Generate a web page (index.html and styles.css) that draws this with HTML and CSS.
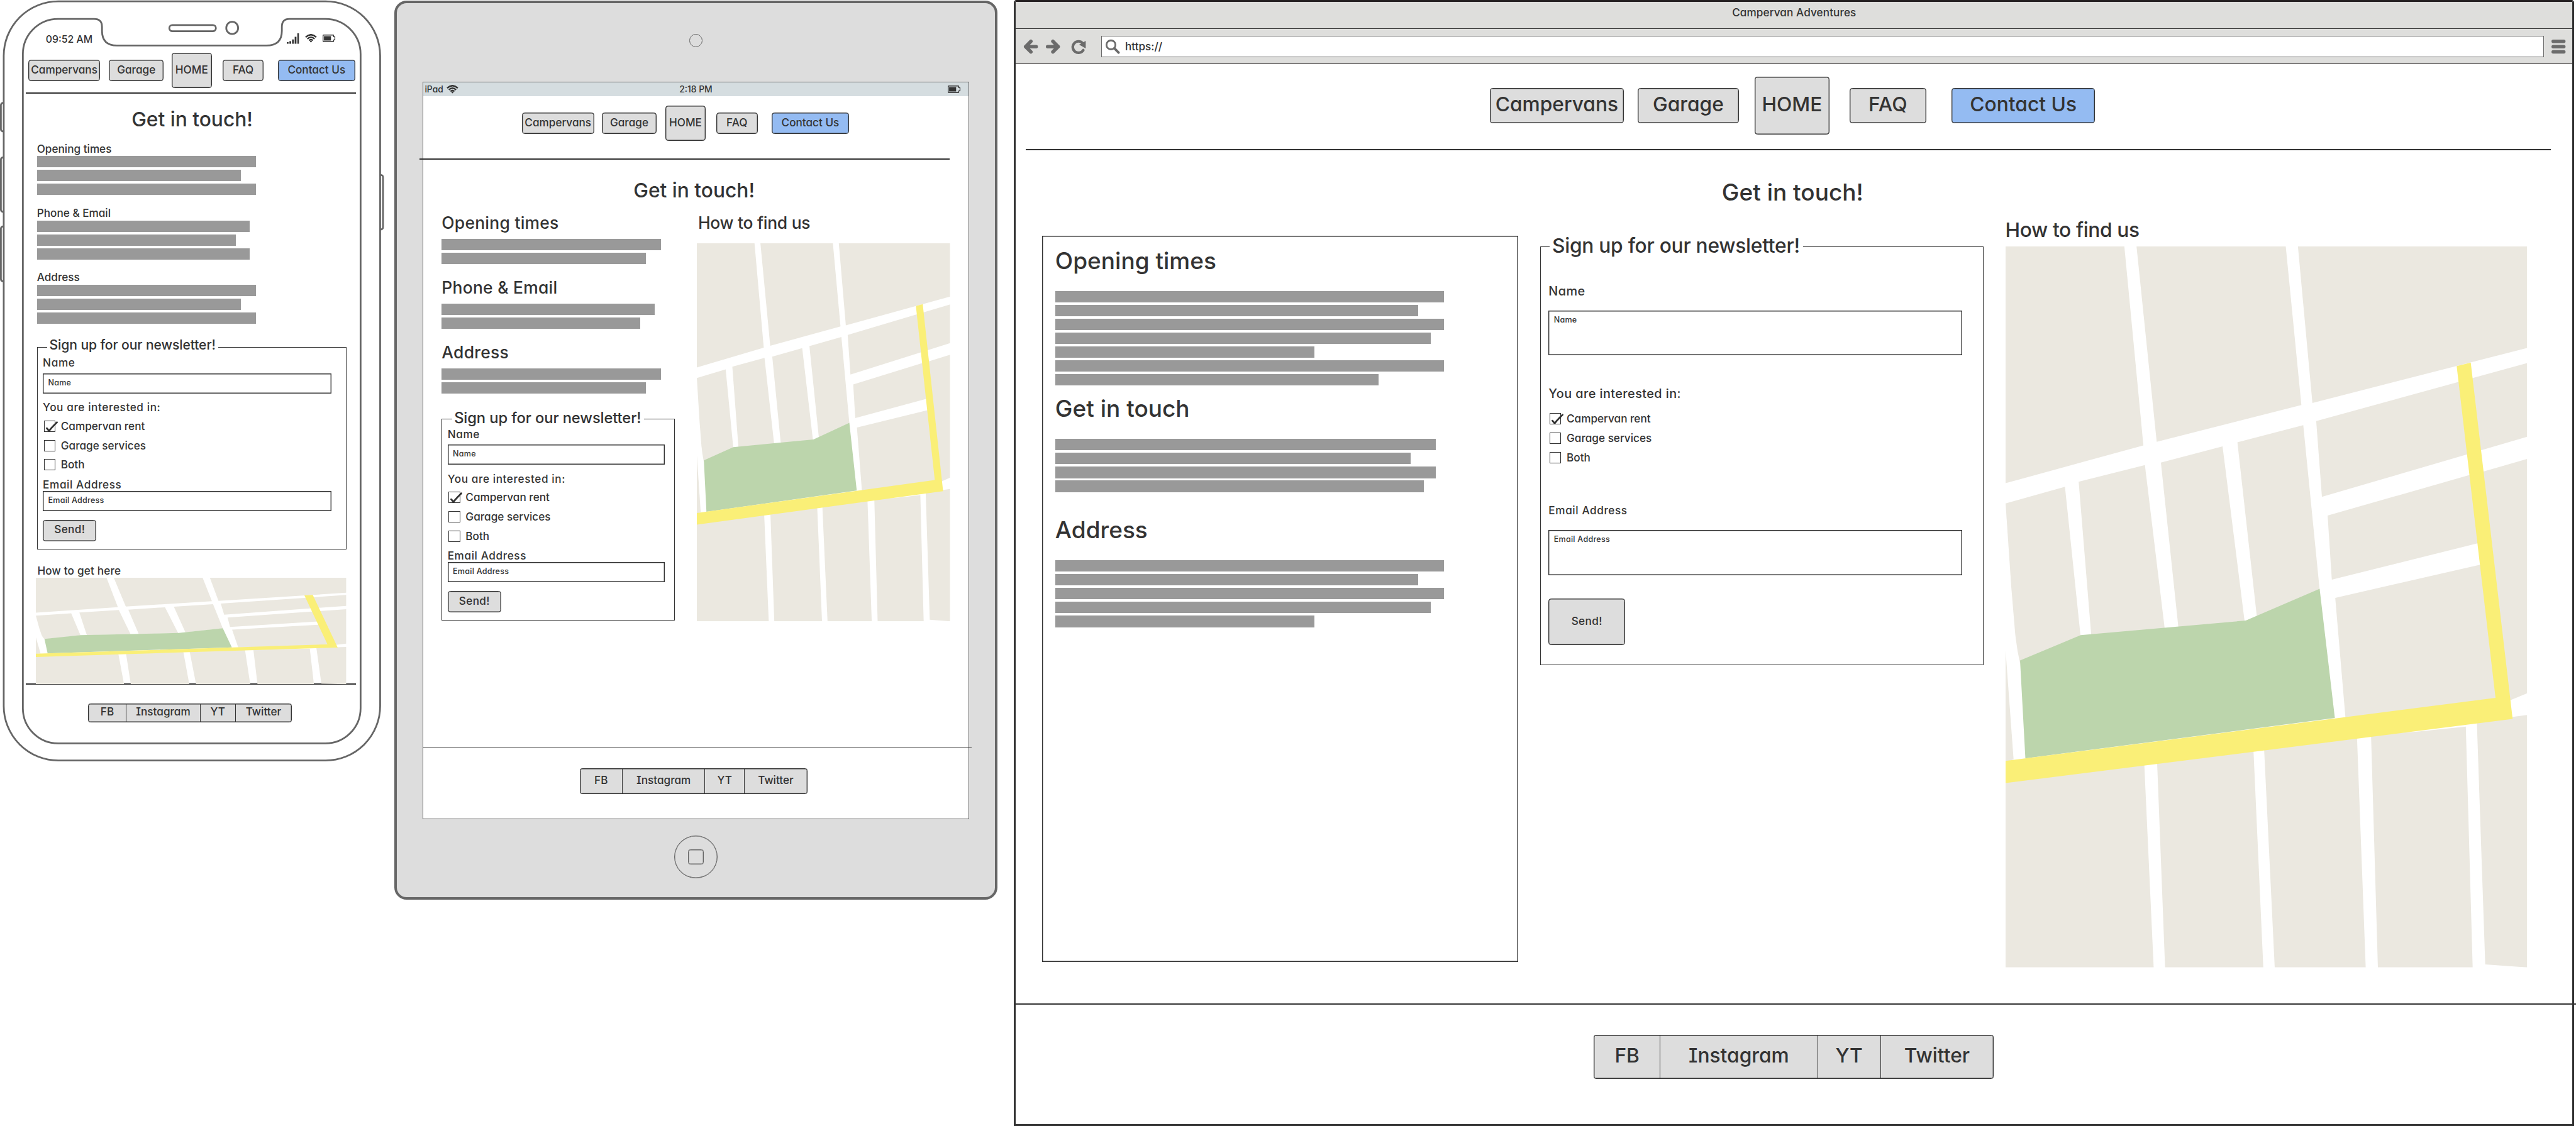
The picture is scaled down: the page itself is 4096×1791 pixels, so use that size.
FILE: index.html
```html
<!DOCTYPE html>
<html lang="en">
<head>
<meta charset="utf-8">
<title>Campervan Adventures</title>
<link rel="stylesheet" href="styles.css">
</head>
<body>
<svg class="defs" aria-hidden="true">
  <symbol id="map" viewBox="69 105 1370 1428" preserveAspectRatio="none">
    <g fill="#ebe8e0">
      <path d="M69 105H381L431 499L69 574Z"/>
      <path d="M413 105H805L846 419L466 492Z"/>
      <path d="M837 105H1439V306L875 415Z"/>
      <path d="M69 614L225 581L266 877L107 931Q98 900 94 870L84 780Z"/>
      <path d="M261 571L435 538L487 862L294 875Z"/>
      <path d="M477 533L639 501L697 848L523 860Z"/>
      <path d="M678 493L851 459L894 785L729 838Z"/>
      <path d="M885 451L1439 336V482L900 601Z"/>
      <path d="M915 638L1305 554L1325 690L926 765Z"/>
      <path d="M1310 554L1439 526V990L1385 1007Z"/>
      <path d="M935 801L1330 733L1375 1010L962 1040Z"/>
      <path d="M69 905L90 1121L69 1127Z"/>
      <path d="M69 1150L433 1125L458 1533H69Z"/>
      <path d="M467 1125L720 1100L746 1533H488Z"/>
      <path d="M748 1098L992 1074L1015 1533H776Z"/>
      <path d="M1029 1072L1150 1066L1278 1056L1296 1533H1047Z"/>
      <path d="M1307 1046L1439 1033V1533L1329 1527Z"/>
    </g>
    <path fill="#bcd5ac" d="M107 925L266 875L700 846L894 783L934 1039L121 1119Z"/>
    <path fill="#faef77" d="M69 1124L1356 999L1254 342L1291 335L1401 1041L69 1168Z"/>
  </symbol>
  <symbol id="wifi" viewBox="0 0 26 19">
    <g fill="none" stroke="#333" stroke-width="3.300">
      <path d="M1.2 7.2Q13 -3.8 24.8 7.2"/>
      <path d="M5 11Q13 3.6 21 11"/>
      <path d="M8.6 14.4Q13 10.6 17.4 14.4"/>
    </g>
    <circle cx="13" cy="16.8" r="2" fill="#333"/>
  </symbol>
  <symbol id="battery" viewBox="0 0 29 17">
    <path d="M2.5 1H24Q25 1 25 2V4.5L28 5.5V11.5L25 12.5V15Q25 16 24 16H2.5Q1 16 1 15V2Q1 1 2.5 1Z" fill="none" stroke="#333" stroke-width="2"/>
    <path d="M3 3.5H19V13.5H3Z" fill="#333"/>
  </symbol>
  <symbol id="signal" viewBox="0 0 28 24">
    <path fill="#333" d="M0 20H4V24H0ZM6 18H10V24H6ZM12 14H16V24H12ZM18 8H22V24H18ZM24 0H28V24H24Z"/>
  </symbol>
  <symbol id="tick" viewBox="0 0 30 26">
    <path d="M5 16L10 22Q16 14 28 2.5" fill="none" stroke="#333" stroke-width="4" stroke-linecap="round" stroke-linejoin="round"/>
  </symbol>
</svg>

<main class="canvas">

<section class="phone">
  <svg class="phone-frame" viewBox="0 0 874 1732" fill="none" stroke="#666" stroke-width="4">
    <rect x="2" y="234" width="14" height="65" rx="5"/>
    <rect x="2" y="358" width="14" height="124" rx="5"/>
    <rect x="2" y="515" width="14" height="125" rx="5"/>
    <rect x="858" y="398" width="13" height="124" rx="5"/>
    <rect x="8.500" y="3" width="856" height="1727" rx="124" fill="#fff"/>
    <path d="M132 43H214Q232 43 232 61V70Q232 103.500 266 103.500H606Q641 103.500 641 70V61Q641 43 658 43H740A80 80 0 0 1 820 123V1611A80 80 0 0 1 740 1691H132A80 80 0 0 1 52 1611V123A80 80 0 0 1 132 43Z"/>
    <rect x="385" y="57" width="106" height="14" rx="7"/>
    <ellipse cx="528" cy="63.500" rx="13.500" ry="14"/>
  </svg>
  <div class="phone-content">
    <div class="phone-status">
      <span class="t24">09:52 AM</span>
      <span class="status-icons">
        <svg class="i-signal"><use href="#signal"/></svg>
        <svg class="i-wifi"><use href="#wifi"/></svg>
        <svg class="i-battery"><use href="#battery"/></svg>
      </span>
    </div>
    <nav class="nav t26">
      <a class="btn n1">Campervans</a><a class="btn n2">Garage</a><a class="btn n3">HOME</a><a class="btn n4">FAQ</a><a class="btn n5 active">Contact Us</a>
    </nav>
    <hr class="rule top-rule">
    <h1 class="t48">Get in touch!</h1>
    <div class="info">
      <h2 class="t26">Opening times</h2>
      <div class="bars"><i style="width:49.8rem"></i><i style="width:46.4rem"></i><i style="width:49.8rem"></i></div>
    </div>
    <div class="info">
      <h2 class="t26">Phone &amp; Email</h2>
      <div class="bars"><i style="width:48.4rem"></i><i style="width:45.2rem"></i><i style="width:48.4rem"></i></div>
    </div>
    <div class="info">
      <h2 class="t26">Address</h2>
      <div class="bars"><i style="width:49.8rem"></i><i style="width:46.4rem"></i><i style="width:49.8rem"></i></div>
    </div>
    <fieldset class="form">
      <legend class="t32">Sign up for our newsletter!</legend>
      <div class="label l-name t26">Name</div>
      <div class="input t19">Name</div>
      <div class="label l-int t26">You are interested in:</div>
      <div class="checks t26">
        <div class="check"><span class="box"><svg><use href="#tick"/></svg></span>Campervan rent</div>
        <div class="check"><span class="box"></span>Garage services</div>
        <div class="check"><span class="box"></span>Both</div>
      </div>
      <div class="label l-mail t26">Email Address</div>
      <div class="input t19">Email Address</div>
      <div class="btn send t26">Send!</div>
    </fieldset>
    <h2 class="map-title t26">How to get here</h2>
    <svg class="map"><use href="#map" width="100%" height="100%"/></svg>
    <hr class="rule foot-rule">
    <footer class="links t26"><a>FB</a><a>Instagram</a><a>YT</a><a>Twitter</a></footer>
  </div>
</section>

<section class="tablet">
  <div class="bezel-top"><span class="camera"></span></div>
  <div class="screen">
    <div class="tablet-status t21">
      <span class="carrier">iPad <svg class="i-wifi"><use href="#wifi"/></svg></span>
      <span>2:18 PM</span>
      <span class="power"><svg class="i-battery"><use href="#battery"/></svg></span>
    </div>
    <nav class="nav t26">
      <a class="btn n1">Campervans</a><a class="btn n2">Garage</a><a class="btn n3">HOME</a><a class="btn n4">FAQ</a><a class="btn n5 active">Contact Us</a>
    </nav>
    <hr class="rule top-rule">
    <h1 class="t48">Get in touch!</h1>
    <div class="columns">
      <div class="col-left">
        <div class="info">
          <h2 class="t40">Opening times</h2>
          <div class="bars"><i style="width:49.8rem"></i><i style="width:46.4rem"></i></div>
        </div>
        <div class="info">
          <h2 class="t40">Phone &amp; Email</h2>
          <div class="bars"><i style="width:48.4rem"></i><i style="width:45.2rem"></i></div>
        </div>
        <div class="info">
          <h2 class="t40">Address</h2>
          <div class="bars"><i style="width:49.8rem"></i><i style="width:46.4rem"></i></div>
        </div>
        <fieldset class="form">
          <legend class="t36">Sign up for our newsletter!</legend>
          <div class="label l-name t26">Name</div>
          <div class="input t19">Name</div>
          <div class="label l-int t26">You are interested in:</div>
          <div class="checks t26">
            <div class="check"><span class="box"><svg><use href="#tick"/></svg></span>Campervan rent</div>
            <div class="check"><span class="box"></span>Garage services</div>
            <div class="check"><span class="box"></span>Both</div>
          </div>
          <div class="label l-mail t26">Email Address</div>
          <div class="input t19">Email Address</div>
          <div class="btn send t26">Send!</div>
        </fieldset>
      </div>
      <div class="col-map">
        <h2 class="t40">How to find us</h2>
        <svg class="map"><use href="#map" width="100%" height="100%"/></svg>
      </div>
    </div>
    <hr class="rule foot-rule">
    <footer class="links t26"><a>FB</a><a>Instagram</a><a>YT</a><a>Twitter</a></footer>
  </div>
  <div class="home-button"><span></span></div>
</section>

<section class="browser">
  <header class="titlebar t26">Campervan Adventures</header>
  <div class="toolbar">
    <svg class="tool back" viewBox="0 0 32 32" fill="none" stroke="#6b6b6b" stroke-width="8" stroke-linecap="round" stroke-linejoin="round"><path d="M16 4L4 16L16 28M4 16H28"/></svg>
    <svg class="tool forward" viewBox="0 0 32 32" fill="none" stroke="#6b6b6b" stroke-width="8" stroke-linecap="round" stroke-linejoin="round"><path d="M16 4L28 16L16 28M28 16H4"/></svg>
    <svg class="tool reload" viewBox="0 0 32 32"><path d="M25 8A13 13 0 1 0 26.500 24" fill="none" stroke="#6b6b6b" stroke-width="6" stroke-linecap="round"/><path d="M32 3V20L17 11.500Z" fill="#6b6b6b"/></svg>
    <div class="url t26">
      <svg class="tool" viewBox="0 0 32 32" fill="none" stroke="#6b6b6b"><circle cx="12.200" cy="12" r="10.200" stroke-width="4"/><path d="M20 20L29.500 29.500" stroke-width="5.500" stroke-linecap="round"/></svg>
      <span>https://</span>
    </div>
    <svg class="tool menu" viewBox="0 0 32 32" fill="#6b6b6b"><rect width="32" height="8" rx="4"/><rect y="12" width="32" height="8" rx="4"/><rect y="24" width="32" height="8" rx="4"/></svg>
  </div>
  <nav class="nav t48">
    <a class="btn n1">Campervans</a><a class="btn n2">Garage</a><a class="btn n3">HOME</a><a class="btn n4">FAQ</a><a class="btn n5 active">Contact Us</a>
  </nav>
  <hr class="rule top-rule">
  <h1 class="t56">Get in touch!</h1>
  <div class="columns">
    <div class="panel">
      <h2 class="t56">Opening times</h2>
      <div class="bars"><i style="width:88.4rem"></i><i style="width:82.6rem"></i><i style="width:88.4rem"></i><i style="width:85.4rem"></i><i style="width:59rem"></i><i style="width:88.4rem"></i><i style="width:73.6rem"></i></div>
      <h2 class="t56 p2">Get in touch</h2>
      <div class="bars"><i style="width:86.6rem"></i><i style="width:80.8rem"></i><i style="width:86.6rem"></i><i style="width:83.8rem"></i></div>
      <h2 class="t56 p3">Address</h2>
      <div class="bars"><i style="width:88.4rem"></i><i style="width:82.6rem"></i><i style="width:88.4rem"></i><i style="width:85.4rem"></i><i style="width:59rem"></i></div>
    </div>
    <fieldset class="form">
      <legend class="t48">Sign up for our newsletter!</legend>
      <div class="label l-name t30">Name</div>
      <div class="input t19">Name</div>
      <div class="label l-int t30">You are interested in:</div>
      <div class="checks t26">
        <div class="check"><span class="box"><svg><use href="#tick"/></svg></span>Campervan rent</div>
        <div class="check"><span class="box"></span>Garage services</div>
        <div class="check"><span class="box"></span>Both</div>
      </div>
      <div class="label l-mail t26">Email Address</div>
      <div class="input t19">Email Address</div>
      <div class="btn send t26">Send!</div>
    </fieldset>
    <div class="col-map">
      <h2 class="t48">How to find us</h2>
      <svg class="map"><use href="#map" width="100%" height="100%"/></svg>
    </div>
  </div>
  <hr class="rule foot-rule">
  <footer class="links t48"><a>FB</a><a>Instagram</a><a>YT</a><a>Twitter</a></footer>
</section>

</main>
</body>
</html>
```

FILE: styles.css
```css
/* 1rem is ten units of the wireframe canvas (5858 units wide on 4096px) */
html { font-size: 6.9921px; }

* { box-sizing: border-box; margin: 0; padding: 0; }

body {
  width: 4096px;
  height: 1791px;
  overflow: hidden;
  background: #fff;
  color: #333;
  font-family: Inter, "Liberation Sans", sans-serif;
  font-weight: 450;
  font-feature-settings: "cv11", "cv08";
}

.defs { position: absolute; width: 0; height: 0; }
svg { display: block; overflow: visible; flex: none; }
h1, h2 { font-weight: inherit; white-space: nowrap; }

/* Type scale */
.t19, .t21, .t24, .t26, .t30, .t32, .t36, .t40, .t48, .t56 {
  font-size: calc(var(--size) * .945);
  line-height: var(--size);
}
.t19 { --size: 1.9rem; }
.t21 { --size: 2.1rem; }
.t24 { --size: 2.4rem; }
.t26 { --size: 2.6rem; }
.t30 { --size: 3rem; }
.t32 { --size: 3.2rem; }
.t36 { --size: 3.6rem; }
.t40 { --size: 4rem; }
.t48 { --size: 4.8rem; }
.t56 { --size: 5.6rem; }

.canvas { display: flex; align-items: flex-start; height: 100%; }

/* Shared parts */
.nav { display: flex; align-items: center; }
.btn {
  display: flex;
  align-items: center;
  justify-content: center;
  flex: none;
  height: 4.8rem;
  padding-bottom: .3rem;
  border: 1px solid #333;
  box-shadow: inset 0 0 0 .4px #333;
  border-radius: .6rem;
  background: #ddd;
  white-space: nowrap;
}
.btn.active { background: #94bbf2; }

.rule { border: 0; height: 1.4px; background: #333; }
h1 { text-align: center; }

.bars { display: flex; flex-direction: column; gap: .56rem; }
.bars i { display: block; height: 2.6rem; background: #999; }

.map { width: 100%; }

.form {
  min-width: 0;
  border: 1.4px solid #333;
  padding: 0 1.2rem 1.8rem;
}
.form legend { margin-left: 1rem; padding: 0 .6rem .8rem .5rem; letter-spacing: -.005em; white-space: nowrap; }
.label { white-space: nowrap; letter-spacing: .035em; }
.label.t30 { letter-spacing: .022em; }
.l-name { margin-top: .3rem; }
.l-int { margin-top: 1.97rem; }
.l-mail { margin-top: 1.95rem; }
.input {
  height: 4.6rem;
  padding: 1rem 1.05rem 0;
  border: 1px solid #333;
  box-shadow: inset 0 0 0 .4px #333;
  letter-spacing: .02em;
}
.l-name + .input { margin-top: 1rem; }
.l-mail + .input { margin-top: .09rem; }
.checks { display: flex; flex-direction: column; gap: 1.8rem; margin-top: 1.6rem; }
.check { display: flex; align-items: center; height: 2.6rem; }
.box {
  flex: none;
  width: 2.6rem;
  height: 2.6rem;
  margin: 0 1.25rem 0 .25rem;
  border: 1px solid #333;
}
.box svg { width: 3rem; height: 2.6rem; }
.send { width: 12.2rem; margin-top: 2rem; padding-bottom: .4rem; letter-spacing: .02em; }

.links {
  display: flex;
  border: 1px solid #333;
  box-shadow: inset 0 0 0 .4px #333;
  border-radius: .5rem;
  background: #ddd;
}
.links a {
  display: flex;
  align-items: center;
  justify-content: center;
  padding-bottom: .4rem;
}
.links a + a { border-left: 1.4px solid #333; }

.i-wifi { width: 2.7rem; height: 1.95rem; }
.i-battery { width: 2.9rem; height: 1.7rem; }
.i-signal { width: 2.8rem; height: 2.4rem; }

/* Phone */
.phone { position: relative; flex: none; width: 87.4rem; height: 173.2rem; }
.phone-frame { position: absolute; inset: 0; width: 100%; height: 100%; }
.phone-content { position: relative; padding-top: 7.9rem; }
.phone-status {
  display: flex;
  justify-content: space-between;
  height: 2.4rem;
  padding: 0 11.2rem 0 10.4rem;
}
.status-icons { display: flex; align-items: center; gap: 1.3rem; margin-top: -.7rem; }
.status-icons .i-signal { margin-top: .1rem; }

.phone .nav { height: 8rem; margin-top: 1.7rem; padding-left: 6.4rem; }
.phone .n1, .tablet .n1 { width: 16.4rem; }
.phone .n2, .tablet .n2 { width: 12.4rem; margin-left: 2rem; }
.phone .n3, .tablet .n3 { width: 9.2rem; height: 8rem; margin-left: 1.8rem; }
.phone .n4, .tablet .n4 { width: 9.4rem; margin-left: 2.4rem; }
.phone .n5, .tablet .n5 { width: 17.6rem; margin-left: 3.2rem; }
.phone .rule { margin-left: 5.8rem; width: 75.2rem; }
.phone .top-rule { margin-top: 1.1rem; }
.phone h1 { margin-top: 3.45rem; margin-bottom: 3rem; }
.phone .info { margin-left: 8.4rem; }
.phone .info + .info { margin-top: 2.8rem; }
.phone .bars { margin-top: .34rem; }
.phone .form { width: 70.4rem; margin: 3.3rem 0 0 8.4rem; }
.phone .input { width: 65.6rem; }
.phone .map-title { margin: 3.5rem 0 .3rem 8.5rem; letter-spacing: .01em; }
.phone .map { position: relative; z-index: 1; width: 70.6rem; height: 24.2rem; margin-left: 8.2rem; }
.phone .foot-rule { margin-top: -.1rem; }
.phone .links { width: 46.4rem; height: 4.2rem; margin: 4.35rem 0 0 20rem; }
.phone .links a { width: 8.5rem; }
.phone .links a:nth-child(2) { width: 16.8rem; }
.phone .links a:nth-child(3) { width: 8rem; }
.phone .links a:nth-child(4) { flex: 1; }

/* Tablet */
.tablet {
  flex: none;
  width: 137.1rem;
  height: 204.4rem;
  margin: .2rem 0 0 2.3rem;
  border: 4.2px solid #666;
  border-radius: 2.8rem;
  background: #ddd;
}
.bezel-top {
  display: flex;
  align-items: center;
  justify-content: center;
  height: 17.8rem;
  padding-bottom: 1rem;
}
.camera { width: 3rem; height: 3rem; border: 1.4px solid #666; border-radius: 50%; }
.screen {
  width: 124.2rem;
  height: 167.8rem;
  margin: 0 auto;
  border: 1.4px solid #666;
  background: #fff;
}
.tablet-status {
  display: grid;
  grid-template-columns: 1fr auto 1fr;
  align-items: center;
  height: 3.2rem;
  padding: 0 .3rem;
  background: #d5dde0;
}
.carrier { display: flex; align-items: center; gap: .8rem; }
.power { display: flex; justify-content: flex-end; padding-right: 1.5rem; }
.tablet .nav { height: 8rem; margin-top: 2.1rem; padding-left: 22.4rem; }
.tablet .n2 { margin-left: 1.8rem; }
.tablet .n3 { margin-left: 2rem; }
.tablet .top-rule { width: 120.6rem; margin: 4.1rem 0 0 -.9rem; }
.tablet h1 { margin-top: 4.6rem; padding-right: .8rem; }
.tablet .columns { display: flex; height: 121.35rem; margin-top: 2.95rem; padding-left: 4.15rem; }
.col-left { width: 53rem; margin-right: 5rem; flex: none; }
.tablet .info + .info { margin-top: 3.24rem; }
.tablet .bars { margin-top: 1.63rem; }
.tablet .info h2 { padding-top: .1rem; letter-spacing: .01em; }
.tablet .form { margin-top: 3.6rem; }
.tablet legend { padding-bottom: .75rem; }
.tablet .l-name { margin-top: -.05rem; }
.tablet .input { width: 49.4rem; }
.tablet .col-map { width: 57.6rem; }
.tablet .col-map h2 { padding-top: .1rem; padding-left: .3rem; letter-spacing: -.01em; }
.tablet .map { height: 86rem; margin-top: 2.55rem; }
.tablet .foot-rule { width: 124.8rem; margin-left: -.1rem; }
.tablet .links { width: 51.8rem; height: 6rem; margin: 4.5rem 0 0 35.5rem; }
.tablet .links a { width: 9.5rem; }
.tablet .links a:nth-child(2) { width: 18.8rem; }
.tablet .links a:nth-child(3) { width: 9rem; }
.tablet .links a:nth-child(4) { flex: 1; }
.home-button {
  display: flex;
  align-items: center;
  justify-content: center;
  width: 9.8rem;
  height: 9.8rem;
  margin: 3.7rem auto 0;
  border: 1.4px solid #666;
  box-shadow: inset 0 0 0 .4px #666;
  border-radius: 50%;
}
.home-button span { width: 3.5rem; height: 3.5rem; border: 1.4px solid #666; box-shadow: inset 0 0 0 .4px #666; border-radius: .5rem; }

/* Browser */
.browser {
  flex: none;
  width: 354.8rem;
  height: 256.15rem;
  margin-left: 3.8rem;
  border: 3px solid #333;
  border-top-color: #231f20;
  border-radius: .6rem .6rem 0 0;
}
.titlebar {
  height: 6.2rem;
  padding-top: 1.1rem;
  border-bottom: 1.4px solid #333;
  background: #dededc;
  text-align: center;
  letter-spacing: .005em;
}
.toolbar {
  display: flex;
  align-items: center;
  height: 8rem;
  padding: 0 1.6rem 0 1.8rem;
  border-bottom: 1.4px solid #231f20;
  background: #dededc;
}
.tool { width: 3.2rem; height: 3.2rem; }
.forward { margin-left: 1.8rem; }
.reload { margin-left: 2.7rem; }
.url {
  display: flex;
  align-items: center;
  flex: 1;
  height: 4.8rem;
  margin: 0 1.6rem 0 3.5rem;
  padding-left: .9rem;
  gap: 1.2rem;
  border: 1.4px solid #6b6b6b;
  background: #fff;
}
.browser .nav { height: 13.2rem; margin-top: 2.8rem; padding-left: 107.8rem; }
.browser .nav .btn { height: 8rem; padding-bottom: .6rem; }
.browser .n1 { width: 30.4rem; }
.browser .n2 { width: 23rem; margin-left: 3.2rem; }
.browser .nav .n3 { width: 17rem; height: 13.2rem; margin-left: 3.6rem; }
.browser .n4 { width: 17.4rem; margin-left: 4.6rem; }
.browser .n5 { width: 32.6rem; margin-left: 5.8rem; }
.browser .top-rule { width: 346.8rem; margin: 3.3rem 0 0 2.2rem; }
.browser h1 { margin-top: 6.75rem; padding-right: .7rem; }
.browser .columns { display: flex; align-items: flex-start; height: 178.5rem; margin-top: 3.35rem; padding-left: 6rem; }
.panel {
  flex: none;
  width: 108.2rem;
  height: 165.2rem;
  margin-top: 3.8rem;
  padding: 2.67rem 0 0 2.8rem;
  border: 1px solid #333;
  box-shadow: inset 0 0 0 .4px #333;
}
.panel .bars { margin-top: 4.13rem; }
.panel .p2 { margin-top: 2.43rem; }
.panel .p3 { margin-top: 5.77rem; }
.browser .form {
  flex: none;
  width: 100.8rem;
  margin: 3.45rem 5rem 0;
  padding: 0 1.8rem 4.4rem;
}
.browser legend { margin-left: .3rem; padding: .2rem .7rem .7rem .5rem; letter-spacing: -.008em; }
.browser .l-name { margin-top: 5.82rem; }
.browser .input { width: 94rem; height: 10.2rem; }
.browser .l-name + .input { margin-top: 2.83rem; }
.browser .l-int { margin-top: 7.27rem; }
.browser .checks { margin-top: 2.91rem; }
.browser .l-mail { margin-top: 9.43rem; }
.browser .l-mail + .input { margin-top: 3.19rem; }
.browser .send { width: 17.4rem; height: 10.6rem; margin-top: 5.4rem; }
.browser .col-map { width: 118.6rem; }
.browser .col-map h2 { padding-top: .15rem; letter-spacing: -.012em; }
.browser .map { height: 164rem; margin-top: 1.28rem; }
.browser .foot-rule { width: 355.2rem; margin-left: -.4rem; }
.browser .links { width: 91rem; height: 10rem; margin: 6.9rem 0 0 131.4rem; }
.browser .links a { width: 14.9rem; padding-bottom: .5rem; }
.browser .links a:nth-child(2) { width: 35.8rem; }
.browser .links a:nth-child(3) { width: 14.3rem; }
.browser .links a:nth-child(4) { flex: 1; }
```
